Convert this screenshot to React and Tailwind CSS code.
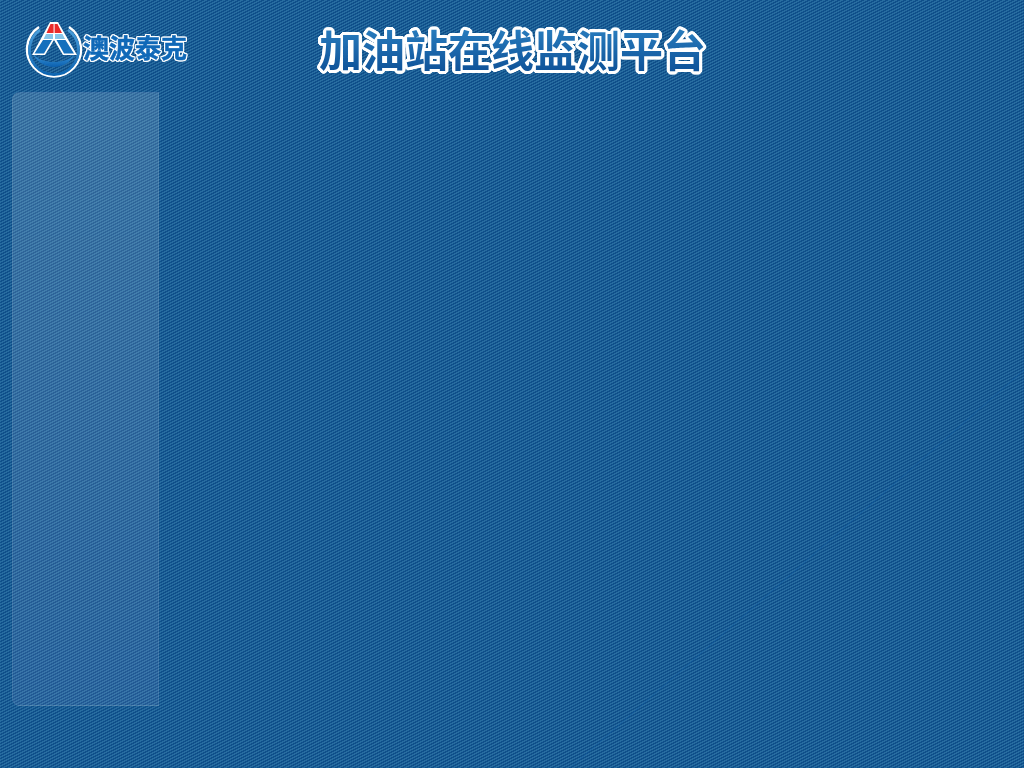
import React from "react";

// white outline round the gradient text, built from stacked drop shadows
const Logo = () => (
  <div className="flex items-start">
    <svg width="58" height="58" viewBox="0 0 58 58" className="shrink-0">
      <defs>
        <linearGradient id="ring" x1="0" y1="0" x2="0" y2="1">
          <stop offset="0" stopColor="#4a9fdc" />
          <stop offset="1" stopColor="#0d65b2" />
        </linearGradient>
        <linearGradient id="crescent" x1="0" y1="0" x2="0" y2="1">
          <stop offset="0" stopColor="#3a97dc" />
          <stop offset="1" stopColor="#0b5fae" />
        </linearGradient>
      </defs>
      <path d="M14 7A27 27 0 1 0 44 7" fill="none" stroke="#fff" strokeWidth="2.4" />
      <path d="M15 10A24.5 24.5 0 1 0 43 10" fill="none" stroke="url(#ring)" strokeWidth="2.6" />
      <path d="M8 34A23.5 23.5 0 0 0 50 34C45 40 37 42 29 42C21 42 13 40 8 34Z" fill="url(#crescent)" />
      <path d="M25 2H33L52 35H38L29 20L20 35H7Z" fill="#fff" />
      <path d="M25.5 4H28.6V13H21.5ZM29.6 4H32.5L37 13H29.6Z" fill="#ea2a2a" />
      <path d="M21 14H28V19H18.6ZM30 14H37.5L40 19H30Z" fill="#86c5ea" />
      <path d="M18 20H27L19 33.5H9.5ZM31.5 20H40.5L49 33.5H39Z" fill="#1470bd" />
    </svg>
    <span className="mt-[10px] text-[26px] leading-[34px] font-bold whitespace-nowrap text-[#1069b8] [-webkit-text-stroke:0.5px_#1069b8] [filter:drop-shadow(1px_0_0_#fff)_drop-shadow(-1px_0_0_#fff)_drop-shadow(0_1px_0_#fff)_drop-shadow(0_-1px_0_#fff)] [font-family:'Noto_Sans_CJK_SC',sans-serif]">
      澳波泰克
    </span>
  </div>
);

const App = () => {
  return (
    <div className="relative flex h-[768px] w-[1024px] flex-col overflow-hidden bg-[#1b5e96] bg-[url(data:image/svg+xml,%3Csvg%20xmlns=%27http://www.w3.org/2000/svg%27%20width=%276%27%20height=%273%27%20shape-rendering=%27crispEdges%27%3E%3Crect%20width=%276%27%20height=%273%27%20fill=%27%230f4f8a%27/%3E%3Cpath%20d=%27M0%200h3v1H0zM4%201h2v1H4zM0%201h1v1H0zM2%202h3v1H2z%27%20fill=%27%23276ca0%27/%3E%3C/svg%3E)]">
      <header className="relative flex h-[92px] shrink-0 items-start pt-[20px] pl-[25px]">
        <Logo />
        <h1 className="absolute top-[19px] left-[319px] bg-gradient-to-b from-[#2f86c6] to-[#0b4d94] bg-clip-text text-[43px] leading-[58px] font-bold whitespace-nowrap text-transparent [filter:drop-shadow(1px_0_0_#fff)_drop-shadow(-1px_0_0_#fff)_drop-shadow(0_1px_0_#fff)_drop-shadow(0_-1px_0_#fff)_drop-shadow(1px_1px_0_#fff)_drop-shadow(-1px_-1px_0_#fff)_drop-shadow(-1px_1px_0_#fff)_drop-shadow(1px_-1px_0_#fff)] [font-family:'Noto_Sans_CJK_SC',sans-serif]">
          加油站在线监测平台
        </h1>
      </header>
      <div className="pl-[12px]">
        <aside className="h-[614px] w-[147px] rounded-l-[8px] border border-[#ffffff14] bg-gradient-to-b from-[#ffffff26] to-[#e0c8ff17]" />
      </div>
      <svg className="absolute inset-0" width="1024" height="768" viewBox="0 0 1024 768">
        <path d="M1024 370L570 768" stroke="#0f5ea6" strokeOpacity="0.5" strokeWidth="1" fill="none" />
      </svg>
    </div>
  );
};

export default App;
